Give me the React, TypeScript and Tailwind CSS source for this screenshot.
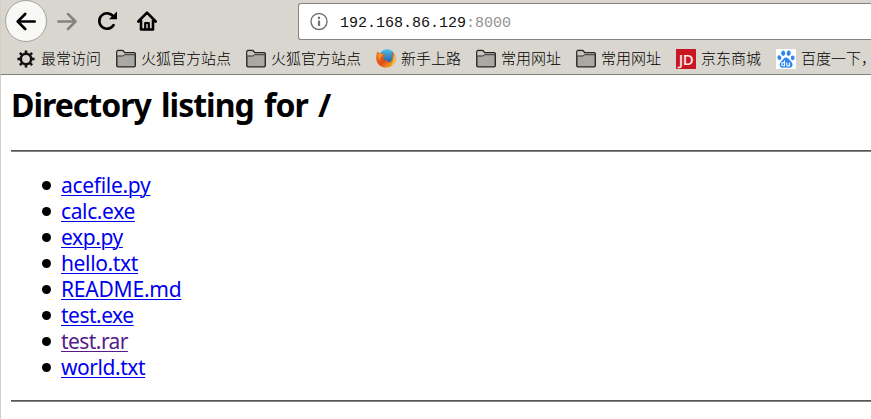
import type { ReactNode } from 'react';

function Folder() {
  return (
    <svg width="20" height="20" viewBox="0 0 20 20" fill="none">
      <path d="M.8 17V2.6L1.8 1.5h5l2 2.2H18.5l.8.8V17l-1 .9H1.8z" fill="#aaa8a3" stroke="#272727" strokeWidth="1.4" />
      <path d="M1.5 2.2h5l1.8 2.3H18.6v1H8L7 6.7H1.5z" fill="#c9c7c1" />
      <path d="M1.2 7h6l1.2-1.3h10.4" stroke="#333" strokeWidth="1" />
    </svg>
  );
}

function Gear() {
  return (
    <svg width="20" height="20" viewBox="0 0 20 20" fill="none" stroke="#111">
      <circle cx="10" cy="10" r="5.2" strokeWidth="2.6" />
      <path d="M10 1.4v3M10 15.6v3M1.4 10h3M15.6 10h3M3.9 3.9l2.2 2.2M13.9 13.9l2.2 2.2M3.9 16.1l2.2-2.2M13.9 6.1l2.2-2.2" strokeWidth="2.6" />
    </svg>
  );
}

function Firefox() {
  return (
    <svg width="20" height="20" viewBox="0 0 20 20">
      <defs>
        <linearGradient id="fox" x1="0" y1="0" x2="1" y2="1">
          <stop offset="0" stopColor="#ee7a1c" />
          <stop offset=".5" stopColor="#e04d18" />
          <stop offset="1" stopColor="#ffca2c" />
        </linearGradient>
        <linearGradient id="globe" x1="0" y1="0" x2="0" y2="1">
          <stop offset="0" stopColor="#48c0ee" />
          <stop offset="1" stopColor="#174a98" />
        </linearGradient>
      </defs>
      <circle cx="11" cy="8.5" r="8.2" fill="url(#globe)" />
      <path d="M1.6 2.2 3.5 4.4 7 4.6 9.2 6 8.8 7.6 6.8 8.8 8.2 11.2 12 11 11 13c4 .8 6-2 5.4-6L15.6 3c3 1.6 4.4 5 4 8.2A9.8 9.4 0 0 1 .3 11C0 7.6.4 4.4 1.6 2.2Z" fill="url(#fox)" />
      <path d="M17.4 4.6c2.4 4 2 9.6-2.4 12.4 2.6-3.4 3-7.6 2.4-12.4Z" fill="#ffd64a" />
      <path d="M2 5c1.5-.5 3.5 0 5 .7L4.5 8 3 12z" fill="#f79b32" />
    </svg>
  );
}

function Jd() {
  return (
    <span className="flex size-5 items-center justify-center bg-[#c91623] pt-0.5 font-['Open_Sans',sans-serif] text-[15px] leading-none font-semibold tracking-[-0.5px] text-[#fbe3e3]">
      JD
    </span>
  );
}

function Baidu() {
  return (
    <svg width="20" height="20" viewBox="0 0 20 20" fill="#2d86f5">
      <path fill="#fff" d="M0 0h20v20H0z" />
      <ellipse cx="7.2" cy="4.2" rx="2" ry="2.7" />
      <ellipse cx="12.7" cy="4.2" rx="2" ry="2.7" transform="rotate(10 12.7 4.2)" />
      <ellipse cx="3.4" cy="8.6" rx="1.9" ry="2.4" transform="rotate(-15 3.4 8.6)" />
      <ellipse cx="16.7" cy="8.8" rx="1.9" ry="2.4" />
      <path d="M10 8.4c2 0 3 2 4.6 3.6 2 2 2.6 3.8 1.4 5.6-1.4 2-4 1-6 1s-4.4.9-5.8-1c-1.2-1.8-.6-3.600 1.300-5.400C7.100 10.600 8 8.400 10 8.400Z" />
      <path d="M8.500 11.500v5.300H7.200a1.500 1.500 0 0 1 0-3.200h1.300M10.800 13.500v2.400c0 .7.400 1 1 1h1.600v-3.400" fill="none" stroke="#fff" strokeWidth="1.100" />
    </svg>
  );
}

const bookmarks: { icon: ReactNode; label: string }[] = [
  { icon: <Gear />, label: '最常访问' },
  { icon: <Folder />, label: '火狐官方站点' },
  { icon: <Folder />, label: '火狐官方站点' },
  { icon: <Firefox />, label: '新手上路' },
  { icon: <Folder />, label: '常用网址' },
  { icon: <Folder />, label: '常用网址' },
  { icon: <Jd />, label: '京东商城' },
  { icon: <Baidu />, label: '百度一下，' },
];

const files = [
  { name: 'acefile.py', style: 'tracking-[-0.3px] text-[#0000ee]' },
  { name: 'calc.exe', style: 'tracking-[-0.38px] text-[#0000ee]' },
  { name: 'exp.py', style: 'tracking-[-0.4px] text-[#0000ee]' },
  { name: 'hello.txt', style: 'tracking-[-0.36px] text-[#0000ee]' },
  { name: 'README.md', style: 'tracking-[-0.22px] text-[#0000ee]' },
  { name: 'test.exe', style: 'tracking-[-0.5px] text-[#0000ee]' },
  { name: 'test.rar', style: 'tracking-[-0.56px] text-[#551a8b]' },
  { name: 'world.txt', style: 'tracking-[-0.44px] text-[#0000ee]' },
];

function Rule() {
  return <hr className="h-0.5 border-t border-b border-t-[#555] border-b-[#858585]" />;
}

export default function App() {
  return (
    <div className="h-[419px] w-[871px] overflow-hidden bg-white text-black">
      <header className="h-[75px] border-b border-[#808080] border-l border-l-[#d4d0c8] bg-[#d9d6cf]">
        <div className="flex h-[43px] items-start">
          <button className="ml-1 flex size-[42px] shrink-0 items-center justify-center rounded-full border border-[#a3a19c] bg-[#f8f8f6]">
            <svg width="20" height="20" viewBox="0 0 20 20" fill="none" stroke="#000" strokeWidth="2.600" strokeLinecap="round" strokeLinejoin="round">
              <path d="M18.700 10.500H1.800M9.200 3 1.700 10.500 9.200 18" />
            </svg>
          </button>
          <svg className="mt-[11px] ml-[10px] shrink-0" width="20" height="20" viewBox="0 0 20 20" fill="none" stroke="#85837f" strokeWidth="2.500" strokeLinecap="round" strokeLinejoin="round">
            <path d="M1.300 10.500h17M11 3l7.500 7.500L11 18" />
          </svg>
          <svg className="mt-[11px] ml-5 shrink-0" width="21" height="20" viewBox="0 0 21 20" fill="none" stroke="#000" strokeWidth="2.600">
            <path d="M16.600 14A7.700 7.700 0 1 1 16.300 5.600" strokeLinecap="round" />
            <path d="M12 8.200h8V.5Z" fill="#000" stroke="none" />
          </svg>
          <svg className="mt-[11px] ml-[19px] shrink-0" width="20" height="20" viewBox="0 0 20 20" fill="none" stroke="#000" strokeWidth="2.600" strokeLinecap="round" strokeLinejoin="round">
            <path d="M1.300 10.500 10 1.600l8.700 8.900M4 9.500v9h12v-9" />
            <path d="M8.200 18v-6h3.600V18" strokeWidth="2.200" />
          </svg>
          <div className="mt-[3px] ml-[141px] flex h-[37px] grow items-center rounded-l-[3px] border border-r-0 border-[#858480] bg-white">
            <svg className="ml-[10px] shrink-0" width="20" height="19" viewBox="0 0 19 19" fill="none" stroke="#737373">
              <circle cx="9.500" cy="9.500" r="8" strokeWidth="1.400" />
              <path d="M9.500 8.500v5.500M9.500 4.800v2.100" strokeWidth="2.200" />
            </svg>
            <span className="mt-[5px] ml-[11px] font-['Liberation_Mono',monospace] text-[15px] leading-5 whitespace-nowrap text-[#111]">
              192.168.86.129<span className="text-[#929292]">:8000</span>
            </span>
          </div>
        </div>
        <nav className="flex h-[31px] items-center gap-[15px] pl-[15px] font-['Noto_Sans_CJK_SC',sans-serif] text-[15px] leading-5 font-light">
          {bookmarks.map((item, i) => (
            <div key={i} className="flex h-5 shrink-0 items-center gap-[5px] whitespace-nowrap">
              {item.icon}
              <span className="-mt-0.5">{item.label}</span>
            </div>
          ))}
        </nav>
      </header>
      <main className="h-[344px] border-l border-[#d4d0c8] pt-[10px] pl-[10px] font-['Noto_Sans',sans-serif]">
        <h2 className="h-10 text-[32px] leading-10 font-bold tracking-[-1px] [word-spacing:3px]">Directory listing for /</h2>
        <div className="pt-[25px]"><Rule /></div>
        <ul className="pt-5 pb-5 pl-[30px] text-[21px] leading-[26px]">
          {files.map((file) => (
            <li key={file.name} className="flex h-[26px] items-center">
              <span className="mt-px mr-[10px] ml-px size-[9px] shrink-0 rounded-full bg-black" />
              <a className={`h-[26px] whitespace-nowrap underline decoration-1 underline-offset-2 ${file.style}`}>{file.name}</a>
            </li>
          ))}
        </ul>
        <Rule />
      </main>
    </div>
  );
}
